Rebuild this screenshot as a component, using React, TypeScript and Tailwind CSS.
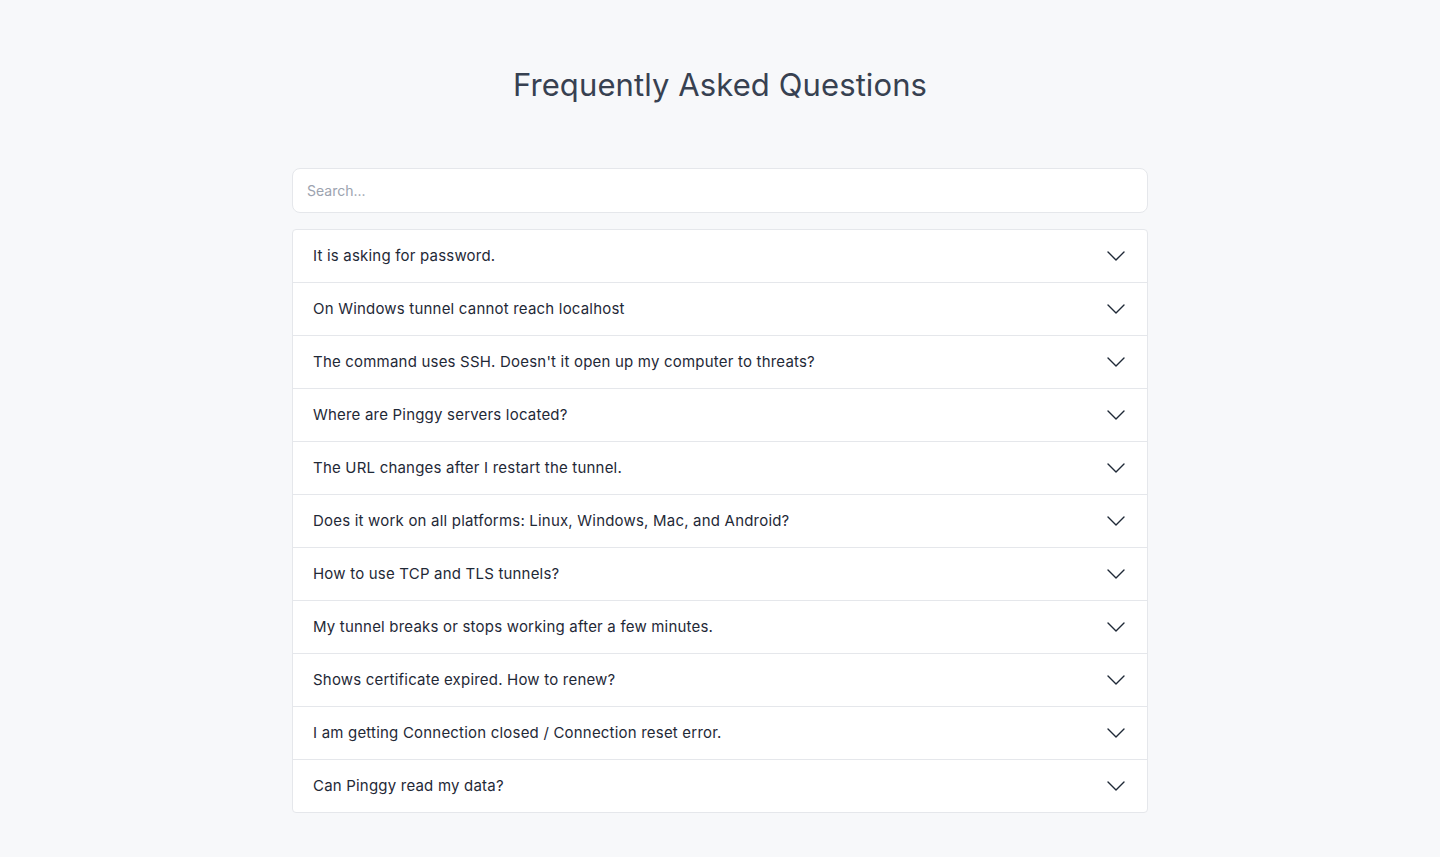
import { useState } from "react";

const questions = [
  "It is asking for password.",
  "On Windows tunnel cannot reach localhost",
  "The command uses SSH. Doesn't it open up my computer to threats?",
  "Where are Pinggy servers located?",
  "The URL changes after I restart the tunnel.",
  "Does it work on all platforms: Linux, Windows, Mac, and Android?",
  "How to use TCP and TLS tunnels?",
  "My tunnel breaks or stops working after a few minutes.",
  "Shows certificate expired. How to renew?",
  "I am getting Connection closed / Connection reset error.",
  "Can Pinggy read my data?",
];

function Chevron() {
  return (
    <svg width="18" height="10" viewBox="0 0 18 10" fill="none" className="shrink-0">
      <polyline
        points="1,1 9,9 17,1"
        stroke="#1f2937"
        strokeWidth="1.4"
        strokeLinecap="round"
        strokeLinejoin="round"
      />
    </svg>
  );
}

export default function App() {
  const [query, setQuery] = useState("");
  const shown = questions.filter((q) => q.toLowerCase().includes(query.toLowerCase()));

  return (
    <div className="min-h-[857px] bg-[#f7f8fa] font-['Inter',sans-serif]">
      <div className="mx-auto w-[856px] pt-[64px]">
        <h1 className="text-center text-[31px] font-normal leading-[42px] tracking-[0.1px] text-[#374151]">
          Frequently Asked Questions
        </h1>

        <input
          type="text"
          value={query}
          onChange={(e) => setQuery(e.target.value)}
          placeholder="Search..."
          className="mt-[62px] block h-[45px] w-full rounded-lg border border-[#e5e7eb] bg-white px-[14px] pb-[1px] text-[14px] text-[#374151] placeholder:text-[#9ca3af] outline-none"
        />

        <div className="mt-[16px] divide-y divide-[#e5e7eb] overflow-hidden rounded-[4px] border border-[#e5e7eb] bg-white">
          {shown.map((q) => (
            <button key={q} className="block w-full text-left">
              <div className="flex h-[52px] items-center justify-between pl-[20px] pr-[22px] text-[15px] tracking-[0.2px] text-[#1f2937]">
                <span>{q}</span>
                <Chevron />
              </div>
            </button>
          ))}
        </div>
      </div>
    </div>
  );
}
